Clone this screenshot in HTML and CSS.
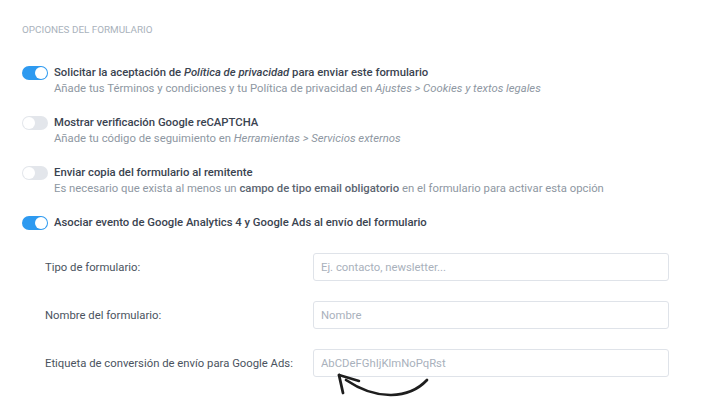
FILE: index.html
```html
<!DOCTYPE html>
<html lang="es">
<head>
<meta charset="utf-8">
<title>Opciones del formulario</title>
<link rel="stylesheet" href="styles.css">
</head>
<body>
<div class="panel">
  <div class="section-title">Opciones del formulario</div>
  <div class="options">
    <div class="option">
      <span class="toggle on"><span class="knob"></span></span>
      <div class="option-text">
        <div class="option-title">Solicitar la aceptación de <em>Política de privacidad</em> para enviar este formulario</div>
        <div class="option-desc">Añade tus Términos y condiciones y tu Política de privacidad en <em>Ajustes &gt; Cookies y textos legales</em></div>
      </div>
    </div>
    <div class="option">
      <span class="toggle"><span class="knob"></span></span>
      <div class="option-text">
        <div class="option-title">Mostrar verificación Google reCAPTCHA</div>
        <div class="option-desc">Añade tu código de seguimiento en <em>Herramientas &gt; Servicios externos</em></div>
      </div>
    </div>
    <div class="option">
      <span class="toggle"><span class="knob"></span></span>
      <div class="option-text">
        <div class="option-title">Enviar copia del formulario al remitente</div>
        <div class="option-desc">Es necesario que exista al menos un <strong>campo de tipo email obligatorio</strong> en el formulario para activar esta opción</div>
      </div>
    </div>
    <div class="option">
      <span class="toggle on"><span class="knob"></span></span>
      <div class="option-text">
        <div class="option-title">Asociar evento de Google Analytics 4 y Google Ads al envío del formulario</div>
      </div>
    </div>
  </div>
  <div class="fields">
    <label class="field-label">Tipo de formulario:</label>
    <div class="field-input"><input type="text" placeholder="Ej. contacto, newsletter..."></div>
    <label class="field-label">Nombre del formulario:</label>
    <div class="field-input"><input type="text" placeholder="Nombre"></div>
    <label class="field-label">Etiqueta de conversión de envío para Google Ads:</label>
    <div class="field-input">
      <input type="text" placeholder="AbCDeFGhIjKlmNoPqRst">
    </div>
    <div class="arrow-cell"></div>
    <div class="arrow-cell">
      <svg class="arrow" xmlns="http://www.w3.org/2000/svg" width="100" height="34" viewBox="0 0 100 34">
        <path d="M94 9 C 76 28, 44 30, 13 9" fill="none" stroke="#1e1e1e" stroke-width="2.7" stroke-linecap="round"/>
        <path d="M6 4 L 10 22" fill="none" stroke="#1e1e1e" stroke-width="2.8" stroke-linecap="round"/>
        <path d="M6 4 L 26 10" fill="none" stroke="#1e1e1e" stroke-width="2.5" stroke-linecap="round"/>
      </svg>
    </div>
  </div>
</div>
</body>
</html>
```
FILE: styles.css
```css
* { box-sizing: border-box; }
html, body { margin: 0; padding: 0; background: #ffffff; }
body {
  font-family: Roboto, "Liberation Sans", Arial, sans-serif;
  font-size: 11.3px;
  color: #3a4350;
}
.panel {
  padding: 24px 22px 0 22px;
}
.section-title {
  font-size: 9.9px;
  line-height: 11px;
  text-transform: uppercase;
  color: #a9b2bc;
}
.options {
  margin-top: 30px;
  display: flex;
  flex-direction: column;
  gap: 18px;
}
.option {
  display: flex;
  align-items: flex-start;
}
.toggle {
  flex: none;
  width: 26px;
  height: 14px;
  border-radius: 7px;
  background: #e3e6eb;
  margin-top: 1px;
  margin-right: 6px;
  display: flex;
  align-items: center;
  padding: 0 1px;
}
.toggle .knob {
  width: 12px;
  height: 12px;
  border-radius: 50%;
  background: #ffffff;
}
.toggle.on {
  background: #2e9af0;
  justify-content: flex-end;
}
.option-text { line-height: 16px; }
.option-title {
  font-weight: 500;
  color: #3a4350;
}
.option-desc {
  color: #8e97a2;
}
.option-desc strong {
  font-weight: 500;
  color: #5b6470;
}
.fields {
  margin-top: 22px;
  padding-left: 23px;
  display: grid;
  grid-template-columns: 268px 356px;
  row-gap: 20px;
  align-items: center;
}
.field-label {
  color: #4a5360;
}
.field-input input {
  display: block;
  width: 100%;
  height: 28px;
  border: 1px solid #dfe3e9;
  border-radius: 3px;
  padding: 0 7px;
  font-family: Roboto, "Liberation Sans", Arial, sans-serif;
  font-size: 11.3px;
  color: #3a4350;
  background: #fff;
  outline: none;
}
.field-input input::placeholder { color: #a9b1bc; }
.arrow-cell {
  margin-top: -26px;
  height: 34px;
}
.arrow {
  display: block;
  margin-left: 20px;
}
```
